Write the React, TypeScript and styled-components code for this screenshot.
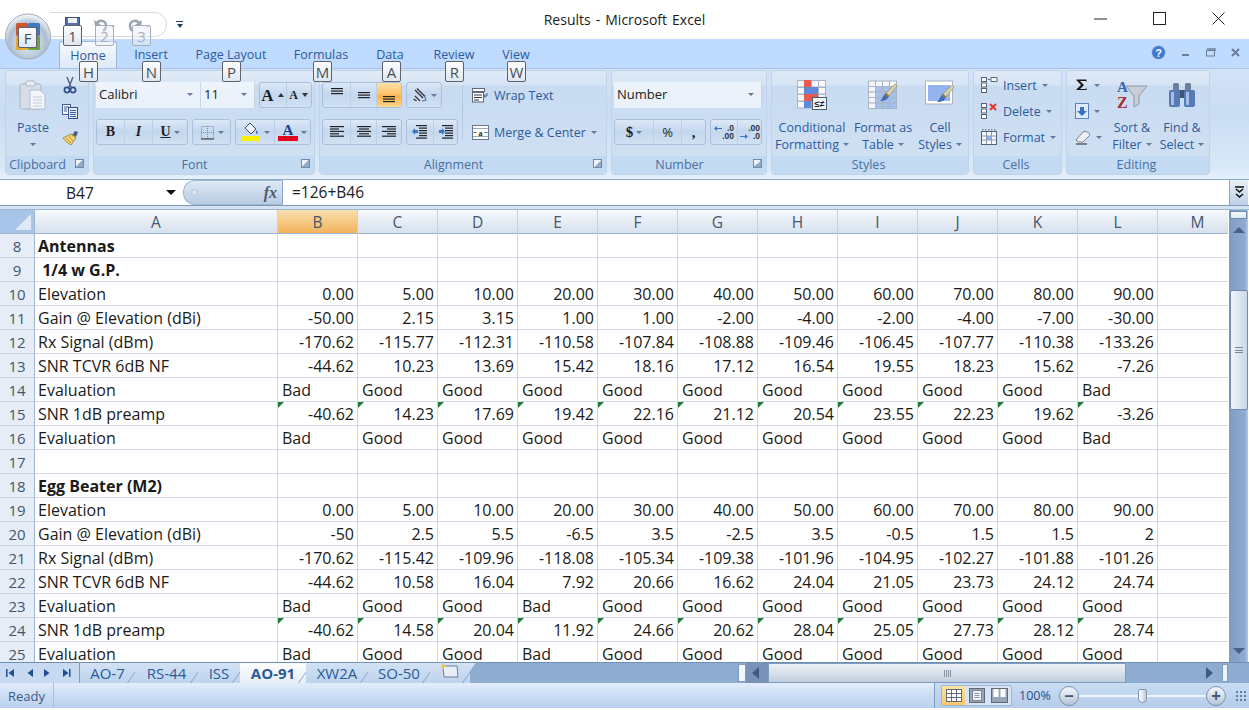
import React from 'react';
import styled, { createGlobalStyle } from 'styled-components';

const GlobalStyle = createGlobalStyle`
  html, body { margin: 0; padding: 0; background: #fff; }
  body { font-family: "Open Sans", "Liberation Sans", sans-serif; overflow: hidden; }
  * { box-sizing: border-box; }
`;

const Window = styled.div`
  position: relative;
  width: 1249px;
  height: 710px;
  display: flex;
  flex-direction: column;
  overflow: hidden;
  background: #fff;
`;

/* ---------- title bar ---------- */
const TitleBar = styled.div`
  height: 39px;
  flex: none;
  display: flex;
  align-items: flex-start;
  background: #fff;
  padding-left: 50px;
`;
const QuickAccess = styled.div`
  width: 117px;
  height: 25px;
  margin-top: 12px;
  display: flex;
  align-items: center;
  padding-left: 15px;
  gap: 13px;
  border: 1px solid #d3dbe5;
  border-left: none;
  border-radius: 0 13px 13px 0;
`;
const QatMenu = styled.div`
  margin: 21px 0 0 9px;
  width: 7px;
  height: 7px;
  border-top: 1px solid #223a6a;
  display: flex;
  justify-content: center;
  &::after {
    content: "";
    margin-top: 2px;
    border: 3.5px solid transparent;
    border-top: 4px solid #223a6a;
  }
`;
const Title = styled.div`
  position: absolute;
  left: 0;
  width: 1249px;
  top: 10px;
  text-align: center;
  font-size: 14px;
  word-spacing: 1.4px;
  line-height: 20px;
  color: #1b1b1b;
`;
const WindowButtons = styled.div`
  margin-left: auto;
  display: flex;
  padding: 12px 24px 0 0;
  gap: 46px;
  position: relative;
`;

/* ---------- tab row ---------- */
const TabRow = styled.div`
  height: 29px;
  flex: none;
  display: flex;
  padding: 2px 0 0 59px;
  background: #bfdbff;
`;
const RibbonTab = styled.div<{ $w: number; $active?: boolean }>`
  width: ${p => p.$w}px;
  text-align: center;
  font-size: 12.5px;
  line-height: 28px;
  color: #2c5a9c;
  border-radius: 3px 3px 0 0;
  ${p => p.$active && `
    background: linear-gradient(#f6fafe, #dce9f8);
    border: 1px solid #9db8d8;
    border-bottom: none;
    line-height: 27px;
  `}
`;
const TabRowTools = styled.div`
  margin-left: auto;
  display: flex;
  align-items: center;
  gap: 15px;
  padding: 0 9px 4px 0;
`;

/* ---------- ribbon ---------- */
const Ribbon = styled.div`
  height: 112px;
  flex: none;
  display: flex;
  gap: 4px;
  padding: 1px 0 0 5px;
  background: linear-gradient(#d3e3f7 0%, #c9dcf3 40%, #d9e9f8 90%, #e6f1fb 100%);
  border-top: 1px solid #a9c3e2;
  border-bottom: 1px solid #8aa8c8;
`;
const Group = styled.div<{ $w: number }>`
  width: ${p => p.$w}px;
  height: 105px;
  display: flex;
  flex-direction: column;
  border: 1px solid #bfd3ea;
  border-radius: 4px;
  background: linear-gradient(#dfeaf7 0, #d6e4f5 14px, #c8dbf1 15px, #d0e0f3 85px);
  overflow: hidden;
`;
const GroupBody = styled.div<{ $pad?: string }>`
  height: 85px;
  flex: none;
  display: flex;
  padding: ${p => p.$pad || '0'};
`;
const GroupFoot = styled.div`
  flex: 1;
  display: flex;
  align-items: center;
  background: #c3daf2;
  padding-right: 3px;
`;
const GroupName = styled.div`
  flex: 1;
  text-align: center;
  font-size: 12.5px;
  line-height: 18px;
  color: #47709f;
`;
const Launcher = styled.div`
  width: 9px;
  height: 9px;
  margin: 0 1px 4px 6px;
  border: 1px solid #6f8aab;
  background: linear-gradient(135deg, #eef3f9 50%, #94aac6 50%);
`;

const Rows = styled.div<{ $w?: number }>`
  ${p => (p.$w ? `width: ${p.$w}px;` : '')}
  flex: none;
  display: flex;
  flex-direction: column;
  gap: 11px;
  padding-top: 11px;
`;
const Row = styled.div`
  display: flex;
  gap: 4px;
  height: 26px;
`;
const ComboPair = styled.div`
  display: flex;
`;
const Combo = styled.div<{ $w: number }>`
  width: ${p => p.$w}px;
  height: 26px;
  flex: none;
  display: flex;
  align-items: center;
  justify-content: space-between;
  padding: 0 7px 2px 3px;
  background: linear-gradient(#eef4fb, #e8f0fa);
  border-right: 1px solid #c6d7ea;
  font-size: 13px;
  color: #222;
`;
const Caret = styled.span<{ $color?: string; $big?: boolean }>`
  flex: none;
  width: 0;
  height: 0;
  border: ${p => (p.$big ? 5 : 3)}px solid transparent;
  border-top: ${p => (p.$big ? 5 : 3)}px solid ${p => p.$color || '#64799a'};
  border-bottom: none;
`;
const Strip = styled.div`
  display: flex;
  height: 26px;
  border: 1px solid #a8c0dc;
  border-radius: 3px;
  background: linear-gradient(#dce8f6 0, #c3d7ef 50%, #d2e1f3 100%);
  overflow: hidden;
`;
const StripButton = styled.div<{ $w: number; $on?: boolean }>`
  width: ${p => p.$w}px;
  flex: none;
  display: flex;
  align-items: center;
  justify-content: center;
  gap: 3px;
  font-size: 13px;
  color: #1d1d1d;
  & + & { border-left: 1px solid #bcd0e6; }
  ${p => p.$on && 'background: linear-gradient(#fde1a6 0, #fbc46d 45%, #fdb14a 55%, #fbd991 100%);'}
`;
const SerifGlyph = styled.span<{ $size?: number; $italic?: boolean; $under?: boolean }>`
  font-family: "Liberation Serif", serif;
  font-weight: 700;
  font-size: ${p => p.$size || 13}px;
  line-height: 1;
  color: #1f1f1f;
  ${p => p.$italic && 'font-style: italic;'}
  ${p => p.$under && 'text-decoration: underline;'}
`;
const VSep = styled.div`
  width: 1px;
  height: 54px;
  flex: none;
  margin: 14px 9px 0 4px;
  background: #b3c8e0;
`;
const TextAction = styled.div`
  height: 26px;
  display: flex;
  align-items: center;
  gap: 5px;
  font-size: 12.5px;
  color: #2c5a9c;
`;
const LargeButton = styled.div<{ $w: number }>`
  width: ${p => p.$w}px;
  flex: none;
  display: flex;
  flex-direction: column;
  align-items: center;
  padding-top: 9px;
  font-size: 12.5px;
  line-height: 17px;
  text-align: center;
  color: #2c5a9c;
  white-space: nowrap;
`;
const LargeIcon = styled.div`
  height: 30px;
  margin-bottom: 9px;
  display: flex;
  align-items: center;
`;
const LabelLine = styled.div`
  display: flex;
  align-items: center;
  gap: 4px;
  height: 17px;
`;
const SmallColumn = styled.div`
  display: flex;
  flex-direction: column;
  flex: none;
  padding-top: 1px;
`;
const SmallRow = styled.div<{ $w?: number; $inset?: number }>`
  height: 26px;
  ${p => (p.$w ? `width: ${p.$w}px;` : '')}
  padding-left: ${p => p.$inset || 0}px;
  display: flex;
  align-items: center;
  gap: 5px;
  font-size: 12.5px;
  color: #2c5a9c;
  white-space: nowrap;
`;

/* ---------- key tips ---------- */
const KeyTip = styled.div<{ $x: number; $y: number; $faded?: boolean }>`
  position: absolute;
  left: ${p => p.$x}px;
  top: ${p => p.$y}px;
  width: 19px;
  height: 21px;
  display: flex;
  align-items: center;
  justify-content: center;
  font-size: 15px;
  color: ${p => (p.$faded ? '#a9afb8' : '#4a4f57')};
  background: ${p => (p.$faded ? 'rgba(235, 240, 247, .45)' : 'linear-gradient(#fdfdfe, #dfe7f2)')};
  border: 1px solid ${p => (p.$faded ? '#a9afb8' : '#5d626b')};
  border-radius: 2px;
`;
const OfficeButton = styled.div`
  position: absolute;
  left: 5px;
  top: 13px;
  width: 46px;
  height: 47px;
`;

/* ---------- formula bar ---------- */
const FormulaBar = styled.div`
  height: 26px;
  flex: none;
  display: flex;
  background: #fff;
  border-bottom: 1px solid #7e9ab8;
`;
const NameBox = styled.div`
  width: 183px;
  flex: none;
  display: flex;
  align-items: center;
  padding: 0 7px 0 66px;
  justify-content: space-between;
  font-size: 15.5px;
  color: #222;
`;
const FxPill = styled.div`
  width: 100px;
  flex: none;
  display: flex;
  align-items: center;
  justify-content: space-between;
  padding: 0 5px 0 7px;
  background: linear-gradient(#dfe9f6, #b8cce4);
  border: 1px solid #9db6d2;
  border-right: 1px solid #8ba6c4;
  border-radius: 12px 0 0 12px;
`;
const PillDot = styled.div`
  width: 7px;
  height: 7px;
  border-radius: 50%;
  background: radial-gradient(#eef3f9, #a2b7d0);
`;
const FxLabel = styled.span`
  font-family: "Liberation Serif", serif;
  font-style: italic;
  font-weight: 700;
  font-size: 16px;
  color: #505a66;
`;
const FormulaText = styled.div`
  flex: 1;
  padding-left: 9px;
  font-size: 15.5px;
  line-height: 25px;
  color: #222;
`;
const ExpandButton = styled.div`
  width: 19px;
  margin-right: 1px;
  display: flex;
  align-items: center;
  justify-content: center;
  background: linear-gradient(#e9f0f8, #bcd0e6);
  border-left: 1px solid #8ba6c4;
`;
const GapStrip = styled.div`
  height: 4px;
  flex: none;
  background: #d5e2f1;
  border-bottom: 1px solid #9db6d2;
`;

/* ---------- sheet ---------- */
const SheetArea = styled.div`
  height: 452px;
  flex: none;
  display: flex;
  overflow: hidden;
`;
const Grid = styled.div`
  width: 1228px;
  flex: none;
  display: grid;
  grid-template-columns: 35px 243px repeat(12, 80px);
  grid-auto-rows: 24px;
  font-size: 16px;
  color: #1a1a1a;
  overflow: hidden;
`;
const Corner = styled.div`
  background: #a9c4e9;
  border-right: 1px solid #9eb6ce;
  border-bottom: 1px solid #9eb6ce;
  display: flex;
  align-items: flex-end;
  justify-content: flex-end;
  padding: 0 3px 3px 0;
  &::after {
    content: "";
    border-left: 16px solid transparent;
    border-bottom: 16px solid #dfeaf7;
  }
`;
const ColHead = styled.div<{ $on?: boolean }>`
  display: flex;
  align-items: center;
  justify-content: center;
  font-size: 15.5px;
  color: #46566b;
  border-right: 1px solid #c4d2e2;
  border-bottom: 1px solid #9eb6ce;
  background: ${p => (p.$on ? 'linear-gradient(#fbe0ae, #f2b35c)' : 'linear-gradient(#f6f9fc, #d6e1ee)')};
`;
const RowHead = styled.div`
  display: flex;
  align-items: center;
  justify-content: center;
  font-size: 15px;
  color: #44556b;
  background: #e6edf7;
  border-right: 1px solid #9eb6ce;
  border-bottom: 1px solid #c4d2e2;
`;
const Cell = styled.div<{ $right?: boolean; $bold?: boolean; $flag?: boolean; $label?: boolean }>`
  position: relative;
  display: flex;
  align-items: center;
  justify-content: ${p => (p.$right ? 'flex-end' : 'flex-start')};
  padding: ${p => (p.$right ? '0 3px 0 0' : `0 0 0 ${p.$label ? 3 : 4}px`)};
  font-weight: ${p => (p.$bold ? 700 : 400)};
  white-space: pre;
  border-right: 1px solid #d0d7e5;
  border-bottom: 1px solid #d0d7e5;
  ${p => p.$flag && `
    &::before {
      content: "";
      position: absolute;
      left: 0;
      top: 0;
      border-top: 6px solid #1f7a2d;
      border-right: 6px solid transparent;
    }
  `}
`;
const VScroll = styled.div`
  width: 19px;
  margin-left: 1px;
  flex: none;
  display: flex;
  flex-direction: column;
  align-items: center;
  background: linear-gradient(90deg, #7f9cc3, #8fabd0 85%, #b7cbe3);
`;
const SplitV = styled.div`
  width: 17px;
  height: 8px;
  margin-top: 1px;
  background: linear-gradient(#f6f9fd, #dce7f4);
  border: 1px solid #6f8db0;
`;
const ArrowUp = styled.div`
  margin-top: 8px;
  border: 6px solid transparent;
  border-bottom: 6px solid #46618a;
  border-top: none;
`;
const ThumbV = styled.div`
  width: 18px;
  height: 120px;
  margin-top: 57px;
  display: flex;
  align-items: center;
  justify-content: center;
  border: 1px solid #6f8db0;
  border-radius: 2px;
  background: linear-gradient(90deg, #f1f5fa, #cad7e7);
`;
const GripV = styled.div`
  width: 8px;
  height: 6px;
  border-top: 1px solid #7b8794;
  border-bottom: 1px solid #7b8794;
  background: linear-gradient(transparent 2px, #7b8794 2px, #7b8794 3px, transparent 3px);
`;
const ArrowDown = styled.div`
  margin-top: auto;
  margin-bottom: 8px;
  border: 6px solid transparent;
  border-top: 6px solid #46618a;
  border-bottom: none;
`;

/* ---------- sheet tabs ---------- */
const SheetTabsBar = styled.div`
  height: 21px;
  flex: none;
  display: flex;
  background: #8eaccf;
  border-top: 1px solid #6f8fb3;
`;
const SheetNav = styled.div`
  width: 80px;
  flex: none;
  display: flex;
  align-items: center;
  background: #c7daf1;
  border-right: 1px solid #7f9cbe;
`;
const NavSvg = styled.svg<{ $shift: number }>`
  margin-left: ${p => p.$shift}px;
`;
const SheetTab = styled.div<{ $w: number; $on?: boolean }>`
  position: relative;
  width: ${p => p.$w}px;
  flex: none;
  display: flex;
  align-items: center;
  justify-content: center;
  font-size: 15px;
  font-weight: ${p => (p.$on ? 700 : 400)};
  color: #2a5a97;
  background: ${p => (p.$on ? 'linear-gradient(#fdfeff, #e6eef8)' : 'linear-gradient(#d3e2f4, #bdd3ee)')};
  &::after {
    content: "";
    position: absolute;
    right: 0;
    top: 0;
    height: 100%;
    width: 12px;
    transform: skewX(-35deg);
    background: inherit;
    border-right: 1px solid #8aa6c6;
    z-index: 0;
  }
`;
const TabLabel = styled.span`
  position: relative;
  z-index: 1;
`;
const TabsFill = styled.div`
  width: 268px;
  flex: none;
`;
const SplitH = styled.div`
  width: 8px;
  flex: none;
  margin: 1px 0;
  background: #f3f7fc;
  border: 1px solid #7f9cbe;
`;
const ScrollLeft = styled.div`
  width: 22px;
  flex: none;
  display: flex;
  align-items: center;
  padding-left: 6px;
  background: #7892b8;
  &::after {
    content: "";
    border: 6px solid transparent;
    border-right: 7px solid #3e5a82;
    border-left: none;
  }
`;
const ThumbH = styled.div`
  width: 358px;
  flex: none;
  display: flex;
  align-items: center;
  justify-content: center;
  border: 1px solid #7f9cbe;
  background: linear-gradient(#eef2f7, #c0cddd);
`;
const GripH = styled.div`
  width: 7px;
  height: 7px;
  background: repeating-linear-gradient(90deg, #8794a3 0 1px, transparent 1px 2px);
`;
const ScrollRight = styled.div`
  width: 96px;
  flex: none;
  display: flex;
  align-items: center;
  padding-left: 80px;
  &::before {
    content: "";
    border: 6px solid transparent;
    border-left: 7px solid #3e5a82;
    border-right: none;
  }
`;
const SplitHRight = styled(SplitH)`
  width: 6px;
  background: #eef4fb;
`;

/* ---------- status bar ---------- */
const StatusBar = styled.div`
  height: 25px;
  flex: none;
  display: flex;
  align-items: center;
  background: linear-gradient(#e2eefb, #cfe0f6 40%, #b9d1ef);
  font-size: 13px;
  color: #3a5a86;
`;
const StatusReady = styled.div`
  width: 54px;
  height: 100%;
  display: flex;
  align-items: center;
  padding-left: 8px;
  border-right: 1px solid #a9c0dc;
`;
const StatusRight = styled.div`
  margin-left: auto;
  width: 315px;
  height: 100%;
  display: flex;
  align-items: center;
  padding-left: 6px;
  background: linear-gradient(#c9dcf3, #b5cdea);
  border-left: 1px solid #7f9cbe;
`;
const ViewGroup = styled.div`
  display: flex;
  height: 21px;
  border: 1px solid #9cb6d6;
  border-radius: 2px;
  background: #d7e4f5;
`;
const ViewButton = styled.div<{ $on?: boolean }>`
  width: 23px;
  display: flex;
  align-items: center;
  justify-content: center;
  ${p => p.$on && 'background: linear-gradient(#fbe3a8, #f9c768);'}
`;
const Zoom = styled.div`
  width: 40px;
  margin-left: 7px;
  font-size: 12.5px;
  color: #2a4f85;
`;
const ZoomRound = styled.div`
  width: 20px;
  height: 20px;
  flex: none;
  display: flex;
  align-items: center;
  justify-content: center;
  border-radius: 50%;
  border: 1px solid #7d93ae;
  background: linear-gradient(#f5f8fc, #b5c4d8);
  font-size: 17px;
  font-weight: 700;
  line-height: 1;
  color: #465a75;
`;
const Track = styled.div`
  width: 127px;
  height: 20px;
  display: flex;
  align-items: center;
  justify-content: center;
  background: linear-gradient(#f2f7fd, #f2f7fd) center / 100% 2px no-repeat;
`;
const SliderKnob = styled.div`
  width: 9px;
  height: 14px;
  border: 1px solid #7d93ae;
  border-radius: 2px 2px 5px 5px;
  background: linear-gradient(90deg, #fff, #bccadb);
`;
const Grip = styled.div`
  width: 12px;
  height: 12px;
  margin-left: 9px;
  background: radial-gradient(circle, #5f7ea6 1px, transparent 1.4px) 0 0 / 4px 4px;
`;

/* ---------- icons ---------- */
const Lines = ({ rows }: { rows: [number, number][] }) => (
  <svg width="16" height="14" viewBox="0 0 16 14">
    {rows.map(([x, w], i) => (
      <rect key={i} x={x} y={1 + i * 2.4} width={w} height="1.2" fill="#222" />
    ))}
  </svg>
);
const TopAlign = () => (
  <svg width="16" height="16" viewBox="0 0 16 16">
    {[1, 3.5, 6].map(y => <rect key={y} x="2" y={y} width="12" height="1.2" fill="#222" />)}
  </svg>
);
const MiddleAlign = () => (
  <svg width="16" height="16" viewBox="0 0 16 16">
    {[5, 7.5, 10].map(y => <rect key={y} x="2" y={y} width="12" height="1.2" fill="#222" />)}
  </svg>
);
const BottomAlign = () => (
  <svg width="16" height="16" viewBox="0 0 16 16">
    {[9, 11.5, 14].map(y => <rect key={y} x="2" y={y} width="12" height="1.2" fill="#222" />)}
  </svg>
);
const Orientation = () => (
  <svg width="16" height="16" viewBox="0 0 16 16" fill="none">
    <path d="M3 3l8 8M5 1.5l8 8" stroke="#333" strokeWidth="1.3" />
    <path d="M3 9l5 5M1.5 12l3 2" stroke="#333" strokeWidth="1.2" />
    <path d="M10 14l4-1-1-3" stroke="#4a6fa5" strokeWidth="1.1" />
  </svg>
);
const Indent = ({ flip }: { flip?: boolean }) => (
  <svg width="18" height="16" viewBox="0 0 18 16">
    {[1, 3.5, 6, 8.5, 11, 13.5].map((y, i) => (
      <rect key={y} x={i % 5 === 0 ? 5 : 8} y={y} width={i % 5 === 0 ? 11 : 8} height="1.2" fill="#222" />
    ))}
    <path d={flip ? 'M2 6h3V4l3 3.5L5 11V9H2z' : 'M7 6H4V4L1 7.5 4 11V9h3z'} fill="#3f74c2" />
  </svg>
);
const WrapIcon = () => (
  <svg width="17" height="15" viewBox="0 0 17 15" fill="none">
    <rect x=".5" y=".5" width="12" height="3" fill="#fff" stroke="#5b6a7d" />
    <rect x=".5" y="4.5" width="11" height="9.5" fill="#fff" stroke="#5b6a7d" />
    <path d="M2 7h8M2 9.5h8M2 12h5" stroke="#333" />
    <path d="M15 5v3h-3M13.5 6.5l-2 1.5 2 1.5" stroke="#3c66a0" />
  </svg>
);
const MergeIcon = () => (
  <svg width="17" height="15" viewBox="0 0 17 15" fill="none">
    <rect x=".5" y=".5" width="16" height="14" fill="#fff" stroke="#67788e" />
    <path d="M1 3.5h15M1 11.5h15" stroke="#9aa9ba" />
    <text x="8.5" y="10.5" fontSize="8" fontWeight="700" textAnchor="middle" fontFamily="Liberation Serif" fill="#222">a</text>
    <path d="M1.5 7.5h3M15.5 7.5h-3" stroke="#3c66a0" />
  </svg>
);
const ScissorsIcon = () => (
  <svg width="16" height="18" viewBox="0 0 16 18" fill="none">
    <path d="M5 1l4 10M11 1L7 11" stroke="#55667e" strokeWidth="1.5" />
    <circle cx="5" cy="14" r="2.6" stroke="#2f4e8c" strokeWidth="1.7" />
    <circle cx="11" cy="14" r="2.6" stroke="#2f4e8c" strokeWidth="1.7" />
  </svg>
);
const CopyIcon = () => (
  <svg width="16" height="15" viewBox="0 0 16 15">
    <rect x=".5" y=".5" width="8" height="10" fill="#f5f8fc" stroke="#48639a" />
    <rect x="6.5" y="3.5" width="9" height="11" fill="#e6eef9" stroke="#2f4e8c" />
    <path d="M8 6.5h6M8 8.5h6M8 10.5h6M8 12.5h6M2 3h5M2 5h3M2 7h3" stroke="#3f5e98" />
  </svg>
);
const BrushIcon = () => (
  <svg width="18" height="17" viewBox="0 0 18 17" fill="none">
    <path d="M10 6l3-4 3 1-2 5z" fill="#4d5f7a" />
    <path d="M1 9l8-4 5 4-5 7c-2-1-6-4-8-7z" fill="#f2d272" stroke="#a98f45" />
    <path d="M4 9l5 5M7 7l4 5" stroke="#bb9a3b" />
  </svg>
);
const PasteIcon = () => (
  <svg width="28" height="30" viewBox="0 0 28 30">
    <rect x="1" y="4" width="21" height="25" rx="2" fill="#d6dde7" stroke="#a9b4c3" />
    <rect x="7" y="1" width="9" height="5" rx="1.5" fill="#e8edf3" stroke="#a9b4c3" />
    <path d="M11 10h10l5 5v14H11z" fill="#f3f6fa" stroke="#b3bdca" />
    <path d="M14 17h9M14 20h9M14 23h9M14 26h9" stroke="#c2cbd7" />
  </svg>
);
const GrowFont = ({ up }: { up?: boolean }) => (
  <svg width="8" height="6" viewBox="0 0 8 6"><path d={up ? 'M4 1l3 4H1z' : 'M4 5l3-4H1z'} fill="#333" /></svg>
);
const BorderIcon = () => (
  <svg width="15" height="15" viewBox="0 0 15 15" fill="none">
    <rect x="1.5" y="1.5" width="12" height="12" stroke="#7b8794" strokeDasharray="1 1" />
    <path d="M7.5 1v13M1 7.5h13" stroke="#7b8794" strokeDasharray="1 1" />
    <path d="M1 14h13" stroke="#333" />
  </svg>
);
const FillIcon = () => (
  <svg width="20" height="20" viewBox="0 0 20 20">
    <path d="M9 1l6 6-5 5-6-6z" fill="#eef2f7" stroke="#3d4a5c" />
    <path d="M15 8c2 2 2 4 1 4s-1-2-1-4z" fill="#2d5fa8" />
    <rect x="1" y="14" width="18" height="5" fill="#f8f000" />
  </svg>
);
const FontColorIcon = () => (
  <svg width="20" height="20" viewBox="0 0 20 20">
    <text x="10" y="13" fontSize="15" fontWeight="700" textAnchor="middle" fontFamily="Liberation Serif" fill="#1f3f8a">A</text>
    <rect x="0" y="14" width="20" height="5" fill="#e8001c" />
  </svg>
);
const IncDecimal = ({ dec }: { dec?: boolean }) => (
  <svg width="22" height="18" viewBox="0 0 22 18">
    <text x="21" y="7.5" fontSize="8.5" fontWeight="700" textAnchor="end" fontFamily="Liberation Sans" fill="#333">{dec ? '.00' : '.0'}</text>
    <text x="21" y="16" fontSize="8.5" fontWeight="700" textAnchor="end" fontFamily="Liberation Sans" fill="#333">{dec ? '.0' : '.00'}</text>
    {dec
      ? <path d="M1 13h5V11l3 2.5L6 16v-2H1z" fill="#3f74c2" />
      : <path d="M9 5H4V3L1 5.5 4 8V6h5z" fill="#3f74c2" />}
  </svg>
);
const Brush = ({ x, y }: { x: number; y: number }) => (
  <g transform={`translate(${x} ${y})`}>
    <path d="M9 9L18 0l2 2-8 10z" fill="#d8cfae" stroke="#8f8560" strokeWidth=".6" />
    <path d="M9 9l3 3c-1 3-4 5-9 5 3-2 3-6 6-8z" fill="#3f68b5" />
    <path d="M9 9l3 3-2 1-2-2z" fill="#a27b3a" />
  </g>
);
const CondFormat = () => (
  <svg width="30" height="30" viewBox="0 0 30 30">
    {[0, 7, 14, 21].map(r => [0, 7, 14, 21].map(c => (
      <rect key={`${r}-${c}`} x={c + .5} y={r + .5} width="7" height="6.5" fill="#f6f8fb" stroke="#aab5c4" />
    )))}
    <rect x="7" y="0" width="7" height="7" fill="#e85a4d" />
    <rect x="7" y="7" width="14" height="7" fill="#5f8ad8" />
    <rect x="7" y="14" width="14" height="7" fill="#e85a4d" />
    <rect x="7" y="21" width="7" height="7" fill="#5f8ad8" />
    <rect x="15.5" y="17.5" width="14" height="12" fill="#f6f8fb" stroke="#4c5a6d" />
    <text x="22.5" y="27" fontSize="9" fontWeight="700" textAnchor="middle" fontFamily="Liberation Sans" fill="#222">≤≠</text>
  </svg>
);
const TableFormat = () => (
  <svg width="30" height="30" viewBox="0 0 30 30">
    {[1, 6.5, 12, 17.5, 23].map(r => [0, 7, 14, 21].map(c => (
      <rect key={`${r}-${c}`} x={c + .5} y={r} width="7" height="5.5" fill={r > 1 && c > 0 ? '#a4c0ec' : '#f4f6f9'} stroke="#a9b3c1" />
    )))}
    <Brush x={9} y={4} />
  </svg>
);
const CellStyles = () => (
  <svg width="30" height="30" viewBox="0 0 30 30">
    <rect x=".5" y="1" width="27" height="23" fill="#fff" stroke="#a9b3c1" />
    <rect x="3" y="5" width="22" height="16" fill="#93b4ef" />
    <Brush x={9} y={5} />
  </svg>
);
const SheetGlyph = ({ children }: { children?: React.ReactNode }) => (
  <svg width="17" height="16" viewBox="0 0 17 16" fill="none">
    <rect x=".5" y=".5" width="5" height="4" fill="#fff" stroke="#55647a" />
    <rect x=".5" y="6" width="5" height="4" fill="#fff" stroke="#55647a" />
    <rect x=".5" y="11.5" width="5" height="4" fill="#fff" stroke="#55647a" />
    {children}
  </svg>
);
const FormatCells = () => (
  <svg width="17" height="16" viewBox="0 0 17 16" fill="none">
    <rect x=".5" y="2.5" width="15" height="13" fill="#f4f7fb" stroke="#55647a" />
    <path d="M5.5 3v12M10.5 3v12M1 7h14M1 11h14" stroke="#8a98aa" />
    <rect x="6" y="7" width="4.5" height="4" fill="#8fb0e6" />
    <path d="M1 .8h15" stroke="#55647a" strokeDasharray="1.5 1.5" />
  </svg>
);
const SigmaIcon = () => (
  <svg width="14" height="14" viewBox="0 0 14 14">
    <path d="M1.5 1.5h10v2.5L10.5 3H5l4 4-4 4h5.5l1-1.5V12h-10v-.8L6 7 1.5 2.2z" fill="#1a1a1a" />
  </svg>
);
const FillDown = () => (
  <svg width="14" height="16" viewBox="0 0 14 16">
    <rect x=".5" y=".5" width="13" height="15" fill="#dfeafa" stroke="#5a82bf" />
    <path d="M5 4h4v4h3l-5 5-5-5h3z" fill="#3a6fc4" />
  </svg>
);
const Eraser = () => (
  <svg width="16" height="15" viewBox="0 0 16 15" fill="none">
    <path d="M1 10l7-8c1-1 3-1 4 0l2 1c1 1 1 2 0 3l-6 6H4z" fill="#eef1f5" stroke="#7a8594" />
    <path d="M1 14h11" stroke="#222" />
  </svg>
);
const SortFilter = () => (
  <svg width="32" height="30" viewBox="0 0 32 30">
    <path d="M10 6h21l-8 10v8l-5 3V16z" fill="#c9ced6" stroke="#8f98a4" />
    <text x="1" y="12" fontSize="15" fontWeight="700" fontFamily="Liberation Serif" fill="#3464b4">A</text>
    <text x="1" y="28" fontSize="16" fontWeight="700" fontFamily="Liberation Serif" fill="#a8302c">Z</text>
  </svg>
);
const Binoculars = () => (
  <svg width="28" height="26" viewBox="0 0 28 26">
    <rect x="5" y="1" width="6" height="8" rx="1.5" fill="#6c7f9f" />
    <rect x="17" y="1" width="6" height="8" rx="1.5" fill="#6c7f9f" />
    <rect x="11" y="8" width="6" height="8" fill="#3f5580" />
    <rect x="1" y="8" width="11" height="17" rx="2" fill="#567ab5" />
    <rect x="16" y="8" width="11" height="17" rx="2" fill="#567ab5" />
    <rect x="3" y="10" width="3" height="13" fill="#a5bfe6" />
    <rect x="18" y="10" width="3" height="13" fill="#a5bfe6" />
  </svg>
);
const HelpIcon = () => (
  <svg width="15" height="15" viewBox="0 0 15 15">
    <circle cx="7.5" cy="7.5" r="7" fill="#3f7ad0" stroke="#bcd2ee" />
    <text x="7.5" y="11.5" fontSize="11" fontWeight="700" textAnchor="middle" fontFamily="Liberation Sans" fill="#fff">?</text>
  </svg>
);
const OfficeLogo = () => (
  <svg width="46" height="47" viewBox="0 0 46 47">
    <defs>
      <radialGradient id="orb" cx="50%" cy="62%" r="60%">
        <stop offset="0%" stopColor="#eef3f8" />
        <stop offset="70%" stopColor="#aebfd2" />
        <stop offset="100%" stopColor="#f4f7fa" />
      </radialGradient>
    </defs>
    <circle cx="23" cy="23.5" r="22.5" fill="url(#orb)" stroke="#9fa9b5" />
    <rect x="11" y="10" width="12" height="13" rx="1.5" fill="#d1552a" />
    <rect x="23" y="10" width="12" height="13" rx="1.5" fill="#3e78bc" />
    <rect x="11" y="23" width="12" height="14" rx="1.5" fill="#e4ad2c" />
    <rect x="23" y="23" width="12" height="14" rx="1.5" fill="#6ca23a" />
  </svg>
);
const SaveIcon = () => (
  <svg width="15" height="15" viewBox="0 0 15 15">
    <rect x=".5" y=".5" width="14" height="14" fill="#5470ad" stroke="#3b4f80" />
    <rect x="3" y="1" width="9" height="5" fill="#eef2f8" />
  </svg>
);
const UndoIcon = ({ flip }: { flip?: boolean }) => (
  <svg width="22" height="14" viewBox="0 0 22 14" fill="none">
    <g transform={flip ? 'translate(15 0) scale(-1 1)' : undefined}>
      <path d="M3 6c3-5 10-4 10 2 0 2-1 4-3 5" stroke="#9aa3ae" strokeWidth="2.4" />
      <path d="M1 2l1 6 6-1z" fill="#9aa3ae" />
    </g>
    <path d="M17 7l2.5 3L22 7z" fill="#b6bcc5" />
  </svg>
);
const Minimize = () => <svg width="13" height="13" viewBox="0 0 13 13"><path d="M0 7h13" stroke="#222" /></svg>;
const Maximize = () => <svg width="13" height="13" viewBox="0 0 13 13"><rect x=".5" y=".5" width="12" height="12" fill="none" stroke="#222" /></svg>;
const CloseIcon = () => <svg width="13" height="13" viewBox="0 0 13 13"><path d="M.5.5l12 12M12.5.5l-12 12" stroke="#222" /></svg>;
const MiniMin = () => <svg width="9" height="9" viewBox="0 0 9 9"><rect x="1" y="6" width="7" height="2" fill="#6b7f9b" /></svg>;
const MiniRestore = () => (
  <svg width="11" height="9" viewBox="0 0 11 9" fill="none">
    <rect x="1.5" y="2.5" width="8" height="5.5" stroke="#6b7f9b" />
    <path d="M2 1h8v2" stroke="#6b7f9b" strokeWidth="1.4" />
  </svg>
);
const MiniClose = () => <svg width="9" height="9" viewBox="0 0 9 9"><path d="M1 1l7 7M8 1L1 8" stroke="#6b7f9b" strokeWidth="2" /></svg>;
const Chevrons = () => (
  <svg width="11" height="13" viewBox="0 0 11 13" fill="none" stroke="#111" strokeWidth="1.6">
    <path d="M1 1h9M2 3l3.5 3L9 3M2 8l3.5 3L9 8" />
  </svg>
);
const NavIcon = ({ d, x }: { d: string; x: number }) => (
  <NavSvg $shift={x} width="20" height="12" viewBox="0 0 20 12"><path d={d} fill="#1f4f92" /></NavSvg>
);
const NewSheet = () => (
  <svg width="20" height="17" viewBox="0 0 20 17" fill="none">
    <path d="M3 3h14l1 11H4z" fill="#e8eef6" stroke="#6e7f95" />
    <path d="M3 0l1.5 2.5L7 3 4.5 4 3 6.5 2 4 0 3l2-.5z" fill="#f1c44a" />
  </svg>
);
const NormalView = () => (
  <svg width="16" height="13" viewBox="0 0 16 13" fill="none">
    <rect x=".5" y=".5" width="15" height="12" fill="#fff" stroke="#5f6b7a" />
    <path d="M1 4.5h14M1 8.5h14M5.5 1v11M10.5 1v11" stroke="#5f6b7a" />
  </svg>
);
const LayoutView = () => (
  <svg width="16" height="15" viewBox="0 0 16 15" fill="none">
    <rect x=".5" y=".5" width="15" height="14" fill="#98a5b6" stroke="#5f6b7a" />
    <rect x="3.5" y="2.5" width="9" height="10" fill="#eef2f7" stroke="#7a8796" />
    <path d="M5.5 5.5h5M5.5 7.5h5M5.5 9.5h5" stroke="#8a96a6" />
  </svg>
);
const BreakView = () => (
  <svg width="17" height="15" viewBox="0 0 17 15" fill="none">
    <rect x=".5" y=".5" width="16" height="14" fill="#98a5b6" stroke="#5f6b7a" />
    <rect x="2.5" y="1" width="5" height="8" fill="#fff" />
    <rect x="9.5" y="1" width="5" height="8" fill="#fff" />
  </svg>
);

/* ---------- data ---------- */
const elevation = ['0.00', '5.00', '10.00', '20.00', '30.00', '40.00', '50.00', '60.00', '70.00', '80.00', '90.00'];
const evalA = ['Bad', 'Good', 'Good', 'Good', 'Good', 'Good', 'Good', 'Good', 'Good', 'Good', 'Bad'];
const evalB = ['Bad', 'Good', 'Good', 'Bad', 'Good', 'Good', 'Good', 'Good', 'Good', 'Good', 'Good'];

type SheetRow = { n: number; label: string; bold?: boolean; values?: string[]; text?: boolean; flag?: boolean };
const sheetRows: SheetRow[] = [
  { n: 8, label: 'Antennas', bold: true },
  { n: 9, label: ' 1/4 w G.P.', bold: true },
  { n: 10, label: 'Elevation', values: elevation },
  { n: 11, label: 'Gain @ Elevation (dBi)', values: ['-50.00', '2.15', '3.15', '1.00', '1.00', '-2.00', '-4.00', '-2.00', '-4.00', '-7.00', '-30.00'] },
  { n: 12, label: 'Rx Signal (dBm)', values: ['-170.62', '-115.77', '-112.31', '-110.58', '-107.84', '-108.88', '-109.46', '-106.45', '-107.77', '-110.38', '-133.26'] },
  { n: 13, label: 'SNR TCVR 6dB NF', values: ['-44.62', '10.23', '13.69', '15.42', '18.16', '17.12', '16.54', '19.55', '18.23', '15.62', '-7.26'] },
  { n: 14, label: 'Evaluation', values: evalA, text: true },
  { n: 15, label: 'SNR 1dB preamp', flag: true, values: ['-40.62', '14.23', '17.69', '19.42', '22.16', '21.12', '20.54', '23.55', '22.23', '19.62', '-3.26'] },
  { n: 16, label: 'Evaluation', values: evalA, text: true },
  { n: 17, label: '' },
  { n: 18, label: 'Egg Beater (M2)', bold: true },
  { n: 19, label: 'Elevation', values: elevation },
  { n: 20, label: 'Gain @ Elevation (dBi)', values: ['-50', '2.5', '5.5', '-6.5', '3.5', '-2.5', '3.5', '-0.5', '1.5', '1.5', '2'] },
  { n: 21, label: 'Rx Signal (dBm)', values: ['-170.62', '-115.42', '-109.96', '-118.08', '-105.34', '-109.38', '-101.96', '-104.95', '-102.27', '-101.88', '-101.26'] },
  { n: 22, label: 'SNR TCVR 6dB NF', values: ['-44.62', '10.58', '16.04', '7.92', '20.66', '16.62', '24.04', '21.05', '23.73', '24.12', '24.74'] },
  { n: 23, label: 'Evaluation', values: evalB, text: true },
  { n: 24, label: 'SNR 1dB preamp', flag: true, values: ['-40.62', '14.58', '20.04', '11.92', '24.66', '20.62', '28.04', '25.05', '27.73', '28.12', '28.74'] },
  { n: 25, label: 'Evaluation', values: evalB, text: true },
];
const columns = ['A', 'B', 'C', 'D', 'E', 'F', 'G', 'H', 'I', 'J', 'K', 'L', 'M'];
const ribbonTabs: [string, number][] = [['Home', 58], ['Insert', 68], ['Page Layout', 92], ['Formulas', 88], ['Data', 50], ['Review', 78], ['View', 46]];
const sheetTabs: [string, number][] = [['AO-7', 55], ['RS-44', 63], ['ISS', 42], ['AO-91', 66], ['XW2A', 62], ['SO-50', 62]];
const keyTips: [string, number, number, boolean?][] = [
  ['F', 18, 27], ['1', 63, 25], ['2', 95, 25, true], ['3', 132, 25, true],
  ['H', 79, 61], ['N', 142, 61], ['P', 222, 61], ['M', 313, 61], ['A', 382, 61], ['R', 445, 61], ['W', 507, 61],
];

const Large = ({ icon, lines, w }: { icon: React.ReactNode; lines: [string, string]; w: number }) => (
  <LargeButton $w={w}>
    <LargeIcon>{icon}</LargeIcon>
    <LabelLine>{lines[0]}</LabelLine>
    <LabelLine>{lines[1]}<Caret /></LabelLine>
  </LargeButton>
);

const RibbonPanel = () => (
  <Ribbon>
    <Group $w={84}>
      <GroupBody $pad="0 0 0 2px">
        <LargeButton $w={50}>
          <LargeIcon><PasteIcon /></LargeIcon>
          <LabelLine>Paste</LabelLine>
          <LabelLine><Caret /></LabelLine>
        </LargeButton>
        <SmallColumn>
          <SmallRow $w={26} $inset={4}><ScissorsIcon /></SmallRow>
          <SmallRow $w={26} $inset={4}><CopyIcon /></SmallRow>
          <SmallRow $w={26} $inset={4}><BrushIcon /></SmallRow>
        </SmallColumn>
      </GroupBody>
      <GroupFoot><GroupName>Clipboard</GroupName><Launcher /></GroupFoot>
    </Group>

    <Group $w={222}>
      <GroupBody $pad="0 0 0 2px">
        <Rows>
          <Row>
            <ComboPair>
              <Combo $w={105}>Calibri<Caret /></Combo>
              <Combo $w={54}>11<Caret /></Combo>
            </ComboPair>
            <Strip>
              <StripButton $w={26}><SerifGlyph $size={17}>A</SerifGlyph><GrowFont up /></StripButton>
              <StripButton $w={25}><SerifGlyph $size={12}>A</SerifGlyph><GrowFont /></StripButton>
            </Strip>
          </Row>
          <Row>
            <Strip>
              <StripButton $w={27}><SerifGlyph $size={14}>B</SerifGlyph></StripButton>
              <StripButton $w={28}><SerifGlyph $size={14} $italic>I</SerifGlyph></StripButton>
              <StripButton $w={35}><SerifGlyph $size={14} $under>U</SerifGlyph><Caret /></StripButton>
            </Strip>
            <Strip>
              <StripButton $w={37}><BorderIcon /><Caret /></StripButton>
            </Strip>
            <Strip>
              <StripButton $w={38}><FillIcon /><Caret /></StripButton>
              <StripButton $w={36}><FontColorIcon /><Caret /></StripButton>
            </Strip>
          </Row>
        </Rows>
      </GroupBody>
      <GroupFoot><GroupName>Font</GroupName><Launcher /></GroupFoot>
    </Group>

    <Group $w={288}>
      <GroupBody $pad="0 0 0 2px">
        <Rows $w={136}>
          <Row>
            <Strip>
              <StripButton $w={27}><TopAlign /></StripButton>
              <StripButton $w={26}><MiddleAlign /></StripButton>
              <StripButton $w={25} $on><BottomAlign /></StripButton>
            </Strip>
            <Strip>
              <StripButton $w={34}><Orientation /><Caret /></StripButton>
            </Strip>
          </Row>
          <Row>
            <Strip>
              <StripButton $w={27}><Lines rows={[[1, 14], [1, 9], [1, 14], [1, 9], [1, 14]]} /></StripButton>
              <StripButton $w={26}><Lines rows={[[1, 14], [3, 10], [1, 14], [3, 10], [1, 14]]} /></StripButton>
              <StripButton $w={25}><Lines rows={[[1, 14], [6, 9], [1, 14], [6, 9], [1, 14]]} /></StripButton>
            </Strip>
            <Strip>
              <StripButton $w={26}><Indent /></StripButton>
              <StripButton $w={24}><Indent flip /></StripButton>
            </Strip>
          </Row>
        </Rows>
        <VSep />
        <Rows>
          <TextAction><WrapIcon />Wrap Text</TextAction>
          <TextAction><MergeIcon />Merge &amp; Center<Caret /></TextAction>
        </Rows>
      </GroupBody>
      <GroupFoot><GroupName>Alignment</GroupName><Launcher /></GroupFoot>
    </Group>

    <Group $w={156}>
      <GroupBody $pad="0 0 0 2px">
        <Rows>
          <Row><Combo $w={148}>Number<Caret /></Combo></Row>
          <Row>
            <Strip>
              <StripButton $w={38}><SerifGlyph $size={15}>$</SerifGlyph><Caret /></StripButton>
              <StripButton $w={28}>%</StripButton>
              <StripButton $w={24}><SerifGlyph $size={15}>,</SerifGlyph></StripButton>
            </Strip>
            <Strip>
              <StripButton $w={26}><IncDecimal /></StripButton>
              <StripButton $w={24}><IncDecimal dec /></StripButton>
            </Strip>
          </Row>
        </Rows>
      </GroupBody>
      <GroupFoot><GroupName>Number</GroupName><Launcher /></GroupFoot>
    </Group>

    <Group $w={198}>
      <GroupBody $pad="0 0 0 2px">
        <Large w={76} icon={<CondFormat />} lines={['Conditional', 'Formatting']} />
        <Large w={66} icon={<TableFormat />} lines={['Format as', 'Table']} />
        <Large w={48} icon={<CellStyles />} lines={['Cell', 'Styles']} />
      </GroupBody>
      <GroupFoot><GroupName>Styles</GroupName></GroupFoot>
    </Group>

    <Group $w={89}>
      <GroupBody $pad="0 0 0 7px">
        <SmallColumn>
          <SmallRow><SheetGlyph><path d="M7 2.5h2M10 .5h6v4h-6z" fill="#fff" stroke="#55647a" /></SheetGlyph>Insert<Caret /></SmallRow>
          <SmallRow><SheetGlyph><path d="M9 1l6 6M15 1L9 7" stroke="#e23a2e" strokeWidth="2" /></SheetGlyph>Delete<Caret /></SmallRow>
          <SmallRow><FormatCells />Format<Caret /></SmallRow>
        </SmallColumn>
      </GroupBody>
      <GroupFoot><GroupName>Cells</GroupName></GroupFoot>
    </Group>

    <Group $w={144}>
      <GroupBody $pad="0 0 0 8px">
        <SmallColumn>
          <SmallRow $w={32}><SigmaIcon /><Caret /></SmallRow>
          <SmallRow $w={32}><FillDown /><Caret /></SmallRow>
          <SmallRow $w={32}><Eraser /><Caret /></SmallRow>
        </SmallColumn>
        <Large w={50} icon={<SortFilter />} lines={['Sort &', 'Filter']} />
        <Large w={50} icon={<Binoculars />} lines={['Find &', 'Select']} />
      </GroupBody>
      <GroupFoot><GroupName>Editing</GroupName></GroupFoot>
    </Group>
  </Ribbon>
);

export default function App() {
  return (
    <Window>
      <GlobalStyle />
      <TitleBar>
        <QuickAccess>
          <SaveIcon />
          <UndoIcon />
          <UndoIcon flip />
        </QuickAccess>
        <QatMenu />
        <Title>Results - Microsoft Excel</Title>
        <WindowButtons>
          <Minimize />
          <Maximize />
          <CloseIcon />
        </WindowButtons>
      </TitleBar>

      <TabRow>
        {ribbonTabs.map(([name, w], i) => (
          <RibbonTab key={name} $w={w} $active={i === 0}>{name}</RibbonTab>
        ))}
        <TabRowTools>
          <HelpIcon />
          <MiniMin />
          <MiniRestore />
          <MiniClose />
        </TabRowTools>
      </TabRow>

      <RibbonPanel />

      <FormulaBar>
        <NameBox>B47<Caret $color="#111" $big /></NameBox>
        <FxPill><PillDot /><FxLabel>fx</FxLabel></FxPill>
        <FormulaText>=126+B46</FormulaText>
        <ExpandButton><Chevrons /></ExpandButton>
      </FormulaBar>
      <GapStrip />

      <SheetArea>
        <Grid>
          <Corner />
          {columns.map(c => <ColHead key={c} $on={c === 'B'}>{c}</ColHead>)}
          {sheetRows.map(r => (
            <React.Fragment key={r.n}>
              <RowHead>{r.n}</RowHead>
              <Cell $bold={r.bold} $label>{r.label}</Cell>
              {columns.slice(1, 12).map((c, i) => (
                <Cell key={c} $right={!r.text && !!r.values} $flag={r.flag}>{r.values ? r.values[i] : ''}</Cell>
              ))}
              <Cell />
            </React.Fragment>
          ))}
        </Grid>
        <VScroll>
          <SplitV />
          <ArrowUp />
          <ThumbV><GripV /></ThumbV>
          <ArrowDown />
        </VScroll>
      </SheetArea>

      <SheetTabsBar>
        <SheetNav>
          <NavIcon x={0} d="M6 2h1.5v8H6zM14 2v8L8.5 6z" />
          <NavIcon x={0} d="M13 2v8L7.5 6z" />
          <NavIcon x={-3} d="M7 2v8l5.5-4z" />
          <NavIcon x={-1} d="M7 2v8l5.5-4zM13 2h1.5v8H13z" />
        </SheetNav>
        {sheetTabs.map(([name, w]) => (
          <SheetTab key={name} $w={w} $on={name === 'AO-91'}><TabLabel>{name}</TabLabel></SheetTab>
        ))}
        <SheetTab $w={40}><TabLabel><NewSheet /></TabLabel></SheetTab>
        <TabsFill />
        <SplitH />
        <ScrollLeft />
        <ThumbH><GripH /></ThumbH>
        <ScrollRight />
        <SplitHRight />
      </SheetTabsBar>

      <StatusBar>
        <StatusReady>Ready</StatusReady>
        <StatusRight>
          <ViewGroup>
            <ViewButton $on><NormalView /></ViewButton>
            <ViewButton><LayoutView /></ViewButton>
            <ViewButton><BreakView /></ViewButton>
          </ViewGroup>
          <Zoom>100%</Zoom>
          <ZoomRound>−</ZoomRound>
          <Track><SliderKnob /></Track>
          <ZoomRound>+</ZoomRound>
          <Grip />
        </StatusRight>
      </StatusBar>

      <OfficeButton><OfficeLogo /></OfficeButton>
      {keyTips.map(([k, x, y, faded]) => (
        <KeyTip key={k} $x={x} $y={y} $faded={faded}>{k}</KeyTip>
      ))}
    </Window>
  );
}
